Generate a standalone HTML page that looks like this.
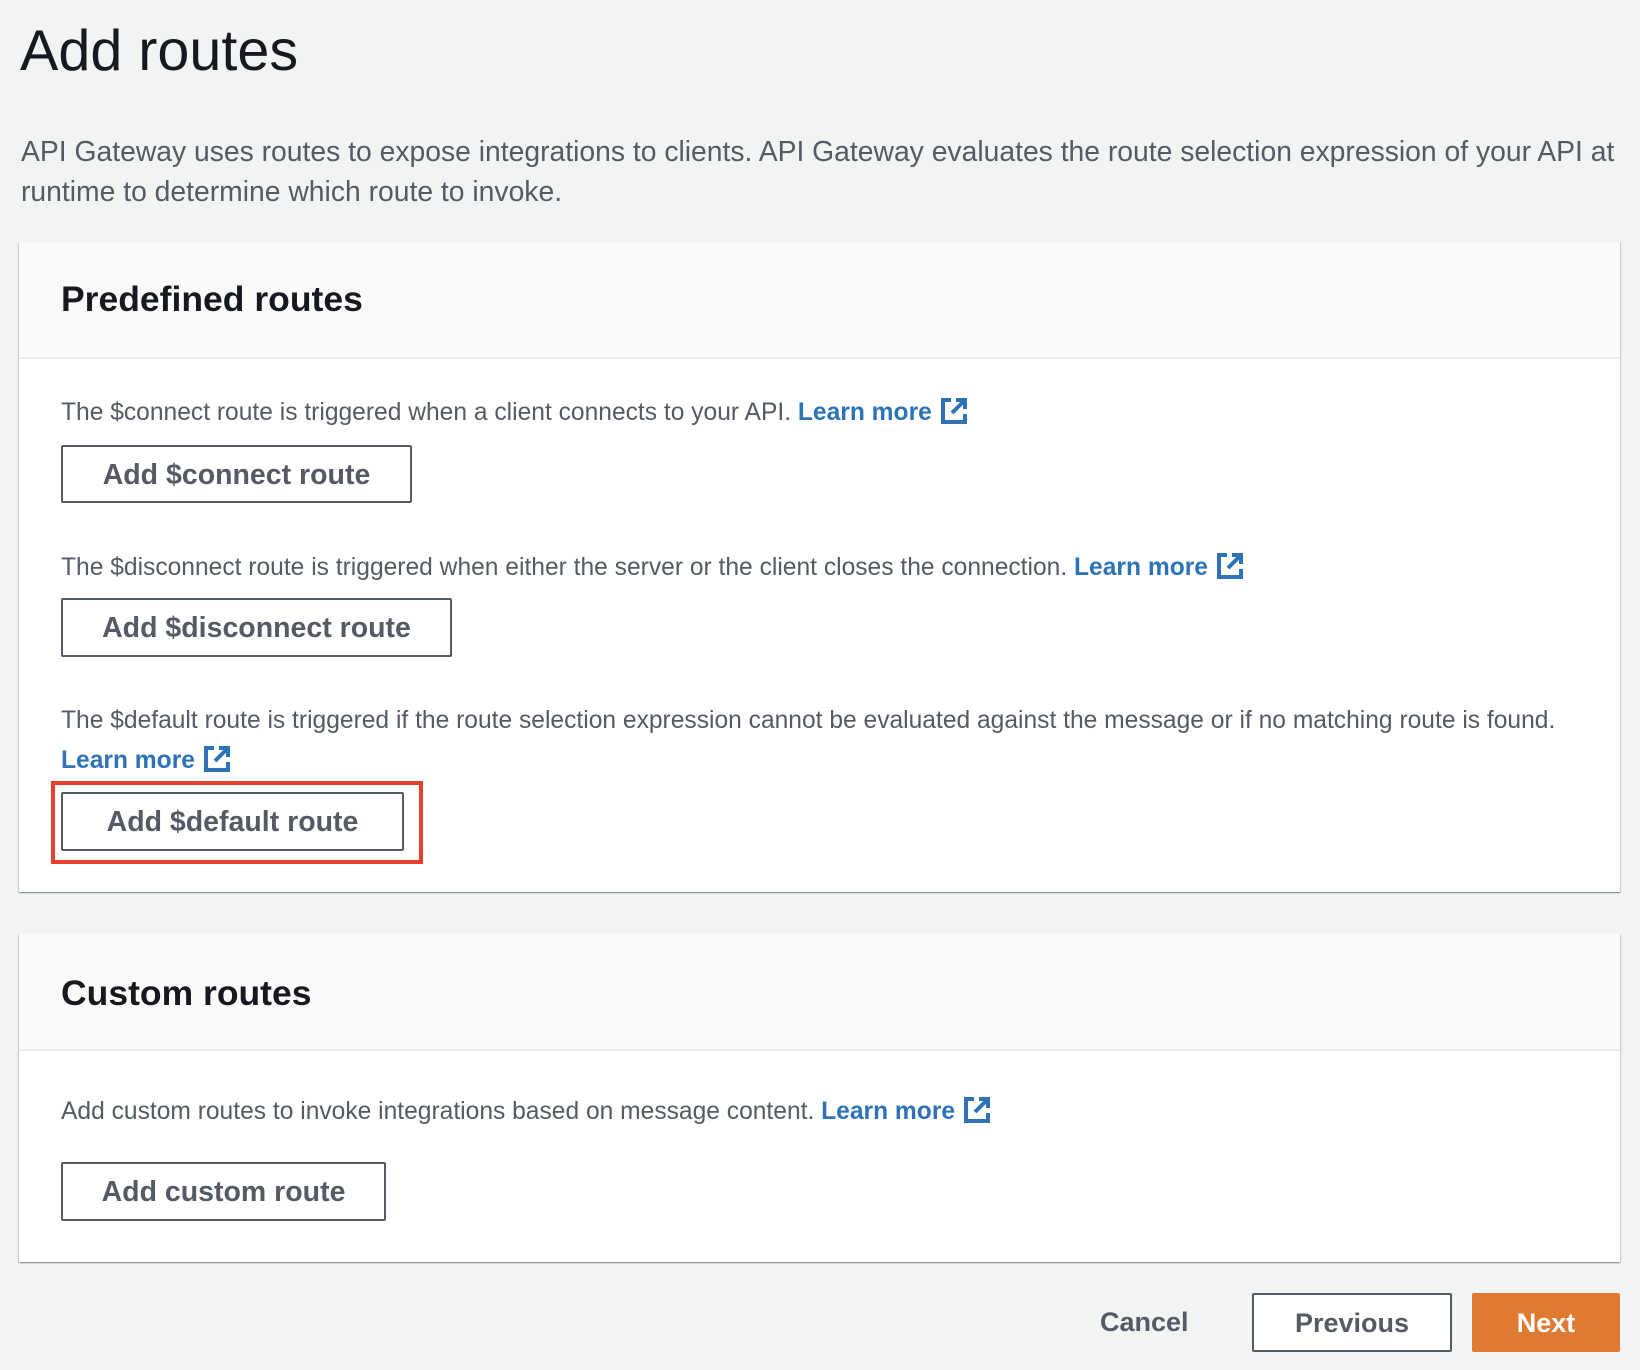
<!DOCTYPE html>
<html><head><meta charset="utf-8"><style>
*{margin:0;padding:0;box-sizing:border-box}
body{width:1640px;height:1370px;background:#f2f3f3;font-family:"Liberation Sans",Arial,sans-serif;color:#545b64;position:relative;overflow:hidden}
.a{position:absolute;white-space:nowrap}
h1{position:absolute;left:20px;top:16px;font-size:57.5px;font-weight:400;color:#16191f;line-height:70px}
.p{left:21px;font-size:28.3px;line-height:40px;color:#545b64}
.card{position:absolute;left:19px;width:1601px;background:#fff;box-shadow:0 1px 1px rgba(0,28,36,.3),1px 1px 1px rgba(0,28,36,.15),-1px 1px 1px rgba(0,28,36,.15)}
.hd{background:#fafafa;border-bottom:2px solid #eaeded;position:relative}
.hd span{position:absolute;left:42px;font-size:35.5px;font-weight:700;color:#16191f}
.t{font-size:24.6px;line-height:30px;color:#545b64}
.l{color:#2e73b8;font-weight:700}
.ic{display:inline-block;width:28px;height:28px;vertical-align:-5px;margin-left:8px}
.btn{position:absolute;border:2px solid #545b64;border-radius:2px;background:#fff;font-size:28.5px;font-weight:700;color:#545b64;display:flex;align-items:center;justify-content:center;padding-top:2px}
</style></head><body>
<h1>Add routes</h1>
<div class="a p" style="top:131px">API Gateway uses routes to expose integrations to clients. API Gateway evaluates the route selection expression of your API at</div>
<div class="a p" style="top:171px">runtime to determine which route to invoke.</div>

<div class="card" style="top:242px;height:650px">
 <div class="hd" style="height:117px"><span style="top:37px">Predefined routes</span></div>
</div>
<div class="a t" style="left:61px;top:397px">The $connect route is triggered when a client connects to your API. <span class="l">Learn more</span><svg class="ic" viewBox="0 0 28 28"><path d="M11 3H3v22h22v-8" fill="none" stroke="#2e73b8" stroke-width="4"/><path d="M16 3h9v9M25 3L12 16" fill="none" stroke="#2e73b8" stroke-width="4"/></svg></div>
<div class="btn" style="left:61px;top:445px;width:351px;height:58px">Add $connect route</div>
<div class="a t" style="left:61px;top:552px">The $disconnect route is triggered when either the server or the client closes the connection. <span class="l">Learn more</span><svg class="ic" viewBox="0 0 28 28"><path d="M11 3H3v22h22v-8" fill="none" stroke="#2e73b8" stroke-width="4"/><path d="M16 3h9v9M25 3L12 16" fill="none" stroke="#2e73b8" stroke-width="4"/></svg></div>
<div class="btn" style="left:61px;top:598px;width:391px;height:59px">Add $disconnect route</div>
<div class="a t" style="left:61px;top:706px">The $default route is triggered if the route selection expression cannot be evaluated against the message or if no matching route is found.</div>
<div class="a t" style="left:61px;top:745px"><span class="l">Learn more</span><svg class="ic" viewBox="0 0 28 28"><path d="M11 3H3v22h22v-8" fill="none" stroke="#2e73b8" stroke-width="4"/><path d="M16 3h9v9M25 3L12 16" fill="none" stroke="#2e73b8" stroke-width="4"/></svg></div>
<div class="a" style="left:51px;top:781px;width:372px;height:83px;border:4px solid #e8402a"></div>
<div class="btn" style="left:61px;top:792px;width:343px;height:59px">Add $default route</div>

<div class="card" style="top:934px;height:328px">
 <div class="hd" style="height:117px"><span style="top:39px">Custom routes</span></div>
</div>
<div class="a t" style="left:61px;top:1096px">Add custom routes to invoke integrations based on message content. <span class="l">Learn more</span><svg class="ic" viewBox="0 0 28 28"><path d="M11 3H3v22h22v-8" fill="none" stroke="#2e73b8" stroke-width="4"/><path d="M16 3h9v9M25 3L12 16" fill="none" stroke="#2e73b8" stroke-width="4"/></svg></div>
<div class="btn" style="left:61px;top:1162px;width:325px;height:59px">Add custom route</div>

<div class="a" style="left:1100px;top:1307px;font-size:27px;font-weight:700;color:#545b64">Cancel</div>
<div class="btn" style="left:1252px;top:1293px;width:200px;height:59px;font-size:27px">Previous</div>
<div class="btn" style="left:1472px;top:1293px;width:148px;height:59px;font-size:27px;background:#e07a33;border-color:#e07a33;color:#fff">Next</div>
</body></html>
